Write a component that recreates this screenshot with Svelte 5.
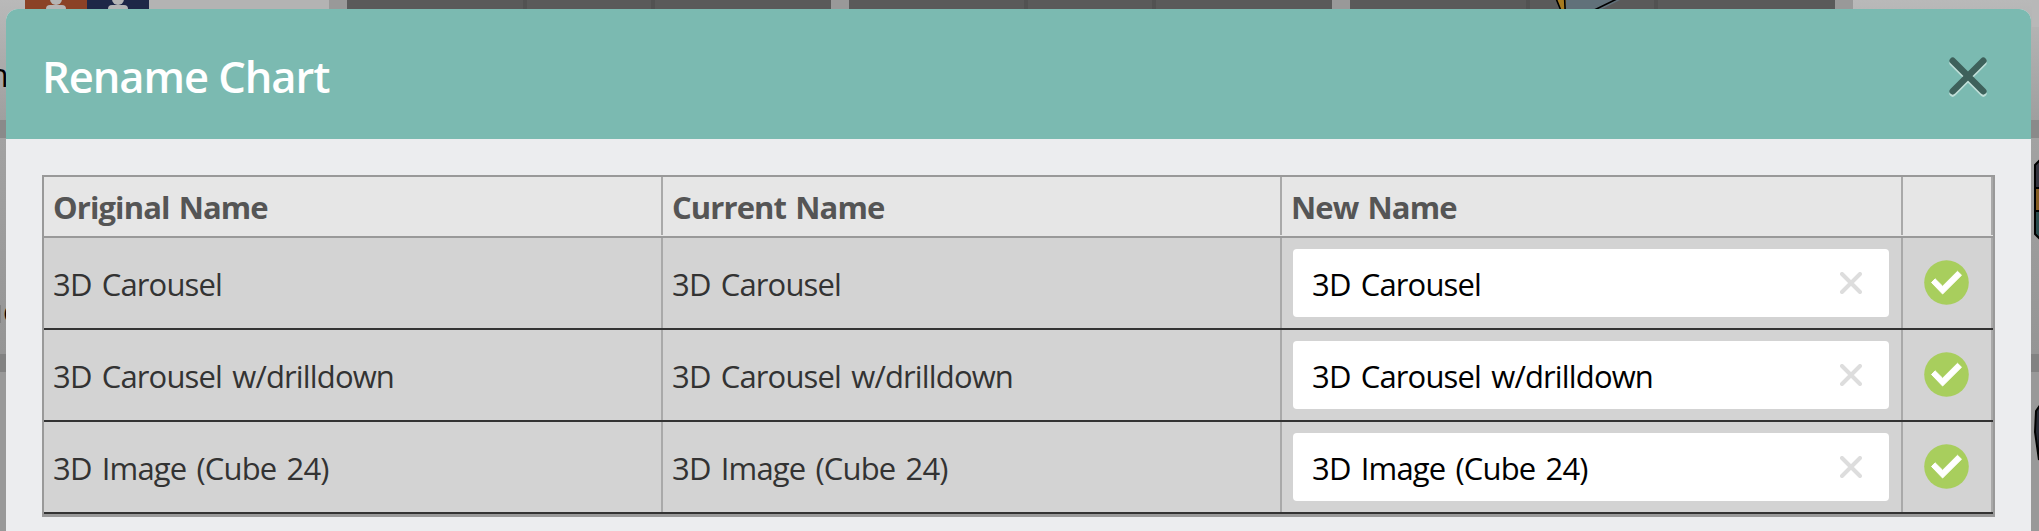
<script>
  let charts = $state([
    { original: '3D Carousel', current: '3D Carousel', name: '3D Carousel' },
    { original: '3D Carousel w/drilldown', current: '3D Carousel w/drilldown', name: '3D Carousel w/drilldown' },
    { original: '3D Image (Cube 24)', current: '3D Image (Cube 24)', name: '3D Image (Cube 24)' }
  ]);
  let open = $state(true);

  const rename = (chart) => {
    chart.current = chart.name;
  };
</script>

<main>
  <!-- dimmed dashboard behind the dialog -->
  <svg class="backdrop" width="2039" height="531" viewBox="0 0 2039 531" aria-hidden="true">
    <defs>
      <linearGradient id="top" x1="0" y1="0" x2="0" y2="1">
        <stop offset="0" stop-color="#b9b9b9" />
        <stop offset="1" stop-color="#9f9f9f" />
      </linearGradient>
      <linearGradient id="mid" x1="0" y1="0" x2="0" y2="1">
        <stop offset="0" stop-color="#a2a2a2" />
        <stop offset="1" stop-color="#959595" />
      </linearGradient>
    </defs>
    <rect width="2039" height="120" fill="url(#top)" />
    <rect y="120" width="2039" height="18" fill="#8a8a8a" />
    <rect y="138" width="2039" height="216" fill="url(#mid)" />
    <rect y="354" width="2039" height="18" fill="#828282" />
    <rect y="372" width="2039" height="159" fill="#999" />
    <rect x="25" width="62" height="40" fill="#8b4226" />
    <rect x="87" width="62" height="40" fill="#1e2747" />
    {#each [56, 118] as x}
      <circle cx={x} cy="-1" r="6" fill="#b5b5b5" />
      <rect x={x - 10} y="5" width="20" height="12" rx="4" fill="#b5b5b5" />
    {/each}
    <rect x="149" width="180" height="20" fill="#b3b3b3" />
    <rect x="329" width="1524" height="20" fill="#999" />
    <rect x="347" width="484" height="20" fill="#5a5a5a" />
    <rect x="849" width="483" height="20" fill="#5a5a5a" />
    <rect x="1350" width="485" height="20" fill="#5a5a5a" />
    {#each [527, 1028, 1530] as x}
      <rect x={x - 4} width="4" height="20" fill="#525252" />
      <rect x={x + 124} width="4" height="20" fill="#525252" />
    {/each}
    <path d="M1565 0L1620 0L1580 20L1566 20Z" fill="#61717a" />
    <path d="M1555 -4L1565 20L1566 -4Z" fill="#a77b20" />
    <path d="M1555 -4L1564 18M1564.500 -4L1565.500 18M1625 -5L1580 17" fill="none" stroke="#000" stroke-width="1.600" />
    <rect x="2032" width="7" height="27" fill="#b8b8b8" />
    <text x="-11" y="87" class="behind">n</text>
    <text x="3" y="323" class="behind">c</text>
    <rect y="305" width="1" height="18" fill="#828282" />
    <g stroke="#000" stroke-width="2">
      <path d="M2042 158L2035 165V188H2042Z" fill="#34343e" />
      <path d="M2035 188H2042V211H2035Z" fill="#865d22" />
      <path d="M2035 211H2042V241L2035 234Z" fill="#2a4c4e" />
      <path d="M2041 404L2036 411L2035 432L2039 460Z" fill="#272b35" />
    </g>
  </svg>

  {#if open}
    <section class="dialog">
      <header>
        <h1>Rename Chart</h1>
        <button class="close" aria-label="Close" onclick={() => (open = false)}>
          <svg width="42" height="44" viewBox="-21 -21 42 44" fill="none" stroke-linecap="round" stroke-width="6.500">
            <path d="M-15.300 -13L15.300 17.500M15.300 -13L-15.300 17.500" stroke="#c0ded8" />
            <path d="M-15.300 -15.300L15.300 15.300M15.300 -15.300L-15.300 15.300" stroke="#3e615b" />
          </svg>
        </button>
      </header>

      <div class="table">
        <div class="row head">
          <div class="cell">Original Name</div>
          <div class="cell">Current Name</div>
          <div class="cell">New Name</div>
          <div class="cell"></div>
        </div>
        {#each charts as chart}
          <div class="row">
            <div class="cell">{chart.original}</div>
            <div class="cell">{chart.current}</div>
            <div class="cell edit">
              <div class="field">
                <input type="text" bind:value={chart.name} />
                <button aria-label="Clear" onclick={() => (chart.name = '')}>
                  <svg width="22" height="22" viewBox="-11 -11 22 22" fill="none" stroke="#ddd" stroke-width="4">
                    <path d="M-9 -9L9 9M9 -9L-9 9" stroke-linecap="round" />
                  </svg>
                </button>
              </div>
            </div>
            <div class="cell save">
              <button aria-label="Save" onclick={() => rename(chart)}>
                <svg width="45" height="45" viewBox="-22.500 -22.500 45 45">
                  <circle r="22.300" fill="#a8ce5d" />
                  <path
                    d="M-15 0L-11.400 -3.700L-3.900 3.700L11 -11.200L15 -7.300L-3.900 11.500Z"
                    fill="#fff"
                    stroke="#fff"
                    stroke-linejoin="round"
                  />
                </svg>
              </button>
            </div>
          </div>
        {/each}
      </div>
    </section>
  {/if}
</main>

<style>
  :global(body) {
    margin: 0;
    overflow: hidden;
  }
  main {
    position: relative;
    box-sizing: border-box;
    height: 531px;
    padding: 9px 8px 0 6px;
    overflow: hidden;
    background: #999;
    font-family: "Open Sans", "Noto Sans", sans-serif;
  }
  .backdrop {
    position: absolute;
    top: 0;
    left: 0;
  }
  .behind {
    font-size: 32px;
    fill: #000;
  }
  .dialog {
    position: relative;
    height: 540px;
    overflow: hidden;
    border-radius: 12px 12px 0 0;
    background: #ecedef;
  }
  header {
    display: flex;
    align-items: center;
    justify-content: space-between;
    box-sizing: border-box;
    height: 130px;
    padding: 5px 42px 0 36px;
    background: #7bbab1;
  }
  h1 {
    margin: 0;
    color: #fff;
    font-size: 43.500px;
    font-weight: 600;
    line-height: 60px;
    letter-spacing: -1.050px;
  }
  button {
    display: flex;
    padding: 0;
    border: 0;
    background: none;
    cursor: pointer;
  }
  .table {
    width: 1949px;
    margin: 36px 0 0 36px;
    border: 2px solid #999;
    border-bottom-width: 3px;
    background: #d3d3d3;
  }
  .row {
    display: grid;
    grid-template-columns: 619px 619px 621px 90px;
    box-sizing: border-box;
    height: 92px;
    border-bottom: 2px solid #333;
  }
  .cell {
    display: flex;
    align-items: center;
    box-sizing: border-box;
    padding: 1px 0 0 9px;
    border-right: 2px solid #a9a9a9;
    color: #333;
    font-size: 31px;
    letter-spacing: -0.850px;
    word-spacing: 3px;
    white-space: nowrap;
  }
  .head {
    height: 61px;
    padding-bottom: 1px;
    border-bottom-color: #999;
    background: #e6e6e6;
  }
  .head .cell {
    padding-top: 2px;
    color: #555;
    font-weight: 700;
    letter-spacing: -0.900px;
    word-spacing: 2px;
  }
  .row .edit {
    padding: 0 12px 0 11px;
  }
  .field {
    display: flex;
    align-items: center;
    box-sizing: border-box;
    width: 100%;
    height: 68px;
    padding: 0 27px 0 19px;
    border-radius: 4px;
    background: #fff;
  }
  .field input {
    flex: 1;
    min-width: 0;
    padding: 1px 0 0;
    border: 0;
    outline: 0;
    background: none;
    color: #000;
    font: inherit;
    letter-spacing: inherit;
    word-spacing: inherit;
  }
  .field button {
    padding-bottom: 1px;
  }
  .row .save {
    justify-content: center;
    padding: 0 2px 1px 0;
  }
</style>
